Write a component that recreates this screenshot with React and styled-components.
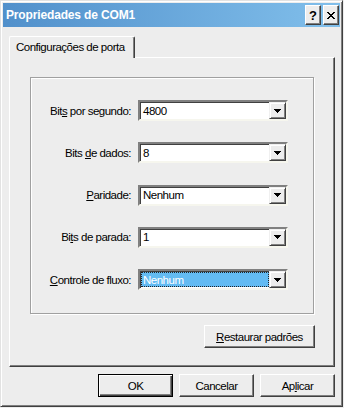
import React from "react";
import styled, { createGlobalStyle } from "styled-components";

const FACE = "#ededed";

const GlobalStyle = createGlobalStyle`
  html, body { margin: 0; padding: 0; background: ${FACE}; }
  body {
    font-family: "Liberation Sans", Arial, sans-serif;
    font-size: 11.5px;
    letter-spacing: -0.5px;
    color: #000;
  }
  * { box-sizing: border-box; }
`;

const Window = styled.div`
  width: 343px;
  height: 407px;
  background: ${FACE};
  border: 1px solid;
  border-color: #e2e2e2 #404040 #404040 #e2e2e2;
  box-shadow: inset 1px 1px 0 #fff, inset -1px -1px 0 #808080;
  padding: 2px;
  display: flex;
  flex-direction: column;
`;

const TitleBar = styled.div`
  height: 24px;
  flex: none;
  display: flex;
  align-items: center;
  padding: 0 1px 0 3px;
  background: linear-gradient(to right, #5190cb, #81bfeb);
`;

const TitleText = styled.span`
  font-weight: bold;
  font-size: 12px;
  letter-spacing: -0.15px;
  color: #fff;
  white-space: nowrap;
`;

const TitleButtons = styled.div`
  margin-left: auto;
  display: flex;
  gap: 2px;
`;

const TitleButton = styled.div`
  width: 16px;
  height: 20px;
  background: ${FACE};
  border: 1px solid;
  border-color: #fff #404040 #404040 #fff;
  box-shadow: inset -1px -1px 0 #808080;
  display: flex;
  align-items: center;
  justify-content: center;
  font-weight: bold;
  font-size: 13px;
  letter-spacing: 0;
  line-height: 1;
  color: #000;
`;

const Client = styled.div`
  flex: 1;
  display: flex;
  flex-direction: column;
  padding: 9px 5px 0 6px;
`;

const TabStrip = styled.div`
  height: 21px;
  display: flex;
  position: relative;
  z-index: 1;
`;

const Tab = styled.div`
  width: 126px;
  height: 22px;
  background: ${FACE};
  border-top: 1px solid #fff;
  border-left: 1px solid #fff;
  border-right: 1px solid #404040;
  box-shadow: inset -1px 0 0 #808080;
  border-top-left-radius: 2px;
  border-top-right-radius: 2px;
  padding: 4px 0 0 6px;
  white-space: nowrap;
`;

const Panel = styled.div`
  height: 310px;
  border: 1px solid;
  border-color: #fff #404040 #404040 #fff;
  box-shadow: inset -1px -1px 0 #808080;
  display: flex;
  flex-direction: column;
  padding: 19px 0 0 20px;
`;

const GroupBox = styled.div`
  width: 284px;
  height: 237px;
  border: 1px solid #a0a0a0;
  box-shadow: inset 1px 1px 0 #fff, 1px 1px 0 #fff;
  display: grid;
  grid-template-columns: 100px 150px;
  grid-auto-rows: 21px;
  column-gap: 7px;
  row-gap: 21.25px;
  align-content: start;
  padding-top: 22px;
`;

const Label = styled.label`
  align-self: center;
  text-align: right;
  white-space: nowrap;
`;

const Key = styled.span`
  text-decoration: underline;
  text-underline-offset: 1px;
`;

const Combo = styled.div`
  height: 21px;
  display: flex;
  border: 2px solid;
  border-color: #808080 #f6f6ee #f6f6ee #808080;
  box-shadow: inset 1px 1px 0 #404040;
  background: #fff;
`;

const ComboText = styled.div`
  flex: 1;
  display: flex;
  align-items: center;
  padding-left: 3px;
  white-space: nowrap;
`;

const ComboSelected = styled.div`
  flex: 1;
  display: flex;
  align-items: center;
  margin: 1px 0 1px 1px;
  padding-left: 1px;
  background: #63bbf2;
  border: 1px dotted #222;
  color: #fff;
  white-space: nowrap;
`;

const DropButton = styled.div`
  width: 17px;
  height: 17px;
  flex: none;
  background: ${FACE};
  border: 1px solid;
  border-color: #f0f0f0 #404040 #404040 #f0f0f0;
  box-shadow: inset 1px 1px 0 #fff, inset -1px -1px 0 #808080;
  display: flex;
  align-items: center;
  justify-content: center;
`;

const Button = styled.div`
  width: ${(p) => p.$w || 75}px;
  height: 23px;
  background: ${FACE};
  border: 1px solid;
  border-color: ${(p) => (p.$default ? "#000" : "#fff #404040 #404040 #fff")};
  box-shadow: ${(p) =>
    p.$default
      ? "inset 1px 1px 0 #fff, inset -1px -1px 0 #404040, inset -2px -2px 0 #808080"
      : "inset -1px -1px 0 #808080"};
  display: flex;
  align-items: center;
  justify-content: center;
  white-space: nowrap;
`;

const RestoreRow = styled.div`
  display: flex;
  justify-content: flex-end;
  padding-right: 19px;
  margin-top: 11px;
`;

const ButtonRow = styled.div`
  display: flex;
  justify-content: flex-end;
  gap: 6px;
  margin-top: 7px;
`;

const Arrow = () => (
  <svg width="7" height="4" viewBox="0 0 7 4" shapeRendering="crispEdges">
    <rect x="0" y="0" width="7" height="1" fill="#000" />
    <rect x="1" y="1" width="5" height="1" fill="#000" />
    <rect x="2" y="2" width="3" height="1" fill="#000" />
    <rect x="3" y="3" width="1" height="1" fill="#000" />
  </svg>
);

const CloseGlyph = () => (
  <svg width="8" height="7" viewBox="0 0 8 7" shapeRendering="crispEdges">
    <path
      d="M0 0h2v1h1v1h2V1h1V0h2v1H7v1H6v1H5v1h1v1h1v1h1v1H6V6H5V5H3v1H2v1H0V6h1V5h1V4h1V3H2V2H1V1H0z"
      fill="#000"
    />
  </svg>
);

const fields = [
  { label: ["Bit", "s", " por segundo:"], value: "4800" },
  { label: ["Bits ", "d", "e dados:"], value: "8" },
  { label: ["", "P", "aridade:"], value: "Nenhum" },
  { label: ["Bi", "t", "s de parada:"], value: "1" },
  { label: ["", "C", "ontrole de fluxo:"], value: "Nenhum", selected: true },
];

export default function App() {
  return (
    <>
      <GlobalStyle />
      <Window>
        <TitleBar>
          <TitleText>Propriedades de COM1</TitleText>
          <TitleButtons>
            <TitleButton>?</TitleButton>
            <TitleButton>
              <CloseGlyph />
            </TitleButton>
          </TitleButtons>
        </TitleBar>
        <Client>
          <TabStrip>
            <Tab>Configurações de porta</Tab>
          </TabStrip>
          <Panel>
            <GroupBox>
              {fields.map((f, i) => (
                <React.Fragment key={i}>
                  <Label>
                    {f.label[0]}
                    <Key>{f.label[1]}</Key>
                    {f.label[2]}
                  </Label>
                  <Combo>
                    {f.selected ? (
                      <ComboSelected>{f.value}</ComboSelected>
                    ) : (
                      <ComboText>{f.value}</ComboText>
                    )}
                    <DropButton>
                      <Arrow />
                    </DropButton>
                  </Combo>
                </React.Fragment>
              ))}
            </GroupBox>
            <RestoreRow>
              <Button $w={111}>
                <Key>R</Key>estaurar padrões
              </Button>
            </RestoreRow>
          </Panel>
          <ButtonRow>
            <Button $default>OK</Button>
            <Button>Cancelar</Button>
            <Button>
              Ap<Key>l</Key>icar
            </Button>
          </ButtonRow>
        </Client>
      </Window>
    </>
  );
}
